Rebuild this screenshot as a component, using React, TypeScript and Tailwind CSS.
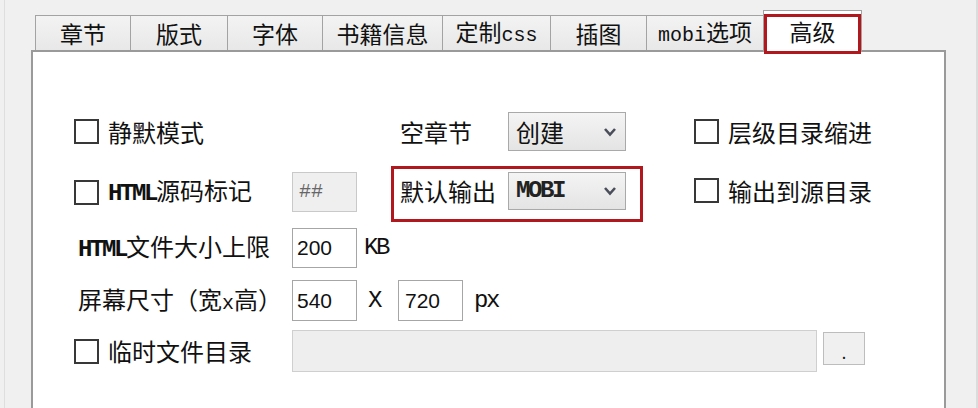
import React from 'react';

const cjk = "font-['Noto_Sans_CJK_SC',sans-serif]";
const mono = "font-['Liberation_Mono',monospace] text-[20px]";
const latin = "font-['Liberation_Mono',monospace] text-[24px] tracking-[-2.4px]";
const num = "font-['Liberation_Sans',Arial,sans-serif] text-[21px]";

const Check = () => (
  <div className="w-[25px] h-[25px] border-2 border-[#383838] bg-white shrink-0"></div>
);

const Chevron = () => (
  <svg width="14" height="10" viewBox="0 0 14 10" className="shrink-0">
    <polyline points="2,2 7,7.5 12,2" fill="none" stroke="#4a4e5a" strokeWidth="2.6" />
  </svg>
);

const Select = ({ children }: { children: React.ReactNode }) => (
  <div className="w-[118px] h-full flex items-center justify-between pl-[7px] pr-[8px] border border-[#a9a9a9] bg-gradient-to-b from-[#f4f4f4] to-[#e4e4e4]">
    {children}
    <Chevron />
  </div>
);

const CheckLabel = ({ children }: { children: React.ReactNode }) => (
  <div className="flex items-center gap-[9px]">
    <Check />
    <span className="text-[24px] leading-none whitespace-nowrap">{children}</span>
  </div>
);

const tabs = [
  { label: '章节', w: 'w-[95px]' },
  { label: '版式', w: 'w-[97px]' },
  { label: '字体', w: 'w-[95px]' },
  { label: '书籍信息', w: 'w-[120px]' },
  { label: '定制css', w: 'w-[108px]' },
  { label: '插图', w: 'w-[96px]' },
  { label: 'mobi选项', w: 'w-[117px]' },
];

const TabLabel = ({ text }: { text: string }) => {
  if (text === '定制css') return <span>定制<span className={mono}>css</span></span>;
  if (text === 'mobi选项') return <span><span className={mono}>mobi</span>选项</span>;
  return <span>{text}</span>;
};

export default function App() {
  return (
    <div className={`w-[978px] h-[408px] bg-[#f0f0f0] overflow-hidden flex pl-[4px] text-[#111] ${cjk}`}>
      <div className="flex-1 flex flex-col border-l border-r-2 border-l-[#dedede] border-r-[#dcdcdc] pl-[26px] pr-[26px] pt-[10px]">
        {/* Tabs */}
        <div className="h-[40px] flex items-end pl-[4px]">
          {tabs.map((t) => (
            <div
              key={t.label}
              className={`${t.w} h-[35px] border-t border-l border-[#a3a3a3] bg-gradient-to-b from-[#f3f3f3] to-[#e8e8e8] flex items-center justify-center text-[23px] leading-none`}
            >
              <TabLabel text={t.label} />
            </div>
          ))}
          <div className="relative z-10 w-[99px] h-[42px] mb-[-2px] border-t border-l border-r border-[#a3a3a3] bg-white flex items-center justify-center text-[23px] leading-none">
            <span className="-mt-[1px]">高级</span>
            <div className="absolute left-0 right-0 top-[3px] bottom-[-2px] border-[3px] border-[#b1181e]"></div>
          </div>
        </div>

        {/* Panel */}
        <div className="flex-1 w-[915px] border-2 border-b-0 border-[#9a9a9a] bg-white pt-[60px] pl-[41px]">
          {/* Row 1 */}
          <div className="h-[39px] flex items-center">
            <div className="w-[317px]">
              <CheckLabel>静默模式</CheckLabel>
            </div>
            <div className="w-[303px] h-full flex items-center pl-[9px]">
              <span className="w-[108px] text-[24px] leading-none">空章节</span>
              <Select>
                <span className="text-[24px] leading-none">创建</span>
              </Select>
            </div>
            <CheckLabel>层级目录缩进</CheckLabel>
          </div>

          {/* Row 2 */}
          <div className="h-[56px] mt-[15px] flex items-start">
            <div className="w-[218px] mt-[12px]">
              <CheckLabel>
                <span className={`${latin} font-bold`}>HTML</span>源码标记
              </CheckLabel>
            </div>
            <div className="w-[99px]">
              <div className={`w-[65px] h-[40px] mt-[6px] border border-[#c9c9c9] bg-[#efefef] flex items-center pl-[6px] text-[#666] ${mono} text-[18px]`}>
                ##
              </div>
            </div>
            <div className="w-[303px]">
              <div className="w-[252px] h-[56px] border-[3px] border-[#b1181e] flex items-start pl-[6px] pt-[3px]">
                <span className="w-[108px] h-[38px] flex items-center text-[24px] leading-none">默认输出</span>
                <div className="h-[38px]">
                  <Select>
                    <span className={`${latin} font-bold leading-none text-[#222]`}>MOBI</span>
                  </Select>
                </div>
              </div>
            </div>
            <div className="mt-[12px]">
              <CheckLabel>输出到源目录</CheckLabel>
            </div>
          </div>

          {/* Row 3 */}
          <div className="h-[40px] mt-[6px] flex items-center">
            <span className="w-[218px] pl-[4px] text-[24px] leading-none whitespace-nowrap">
              <span className={`${latin} font-bold`}>HTML</span>文件大小上限
            </span>
            <div className={`w-[65px] h-[40px] border border-[#a6a6a6] bg-white flex items-center pl-[4px] ${num}`}>200</div>
            <span className={`ml-[7px] ${latin} leading-none`}>KB</span>
          </div>

          {/* Row 4 */}
          <div className="h-[41px] mt-[12px] flex items-center">
            <span className="w-[218px] pl-[4px] text-[24px] leading-none whitespace-nowrap">
              屏幕尺寸（宽<span className={mono}>x</span>高）
            </span>
            <div className={`w-[65px] h-[41px] border border-[#a6a6a6] bg-white flex items-center pl-[4px] ${num}`}>540</div>
            <span className={`w-[41px] pl-[11px] ${latin} leading-none`}>X</span>
            <div className={`w-[65px] h-[41px] border border-[#a6a6a6] bg-white flex items-center pl-[6px] ${num}`}>720</div>
            <span className={`ml-[11px] ${latin} leading-none`}>px</span>
          </div>

          {/* Row 5 */}
          <div className="h-[42px] mt-[9px] flex items-center">
            <div className="w-[218px]">
              <CheckLabel>临时文件目录</CheckLabel>
            </div>
            <div className="w-[525px] h-[42px] border border-[#cfcfcf] bg-[#eeeeee]"></div>
            <button className="ml-[6px] w-[42px] h-[33px] self-start mt-[2px] border border-[#bdbdbd] bg-[#f0f0f0] flex items-end justify-center pb-[4px] text-[16px] leading-none">
              .
            </button>
          </div>
        </div>
      </div>
    </div>
  );
}
